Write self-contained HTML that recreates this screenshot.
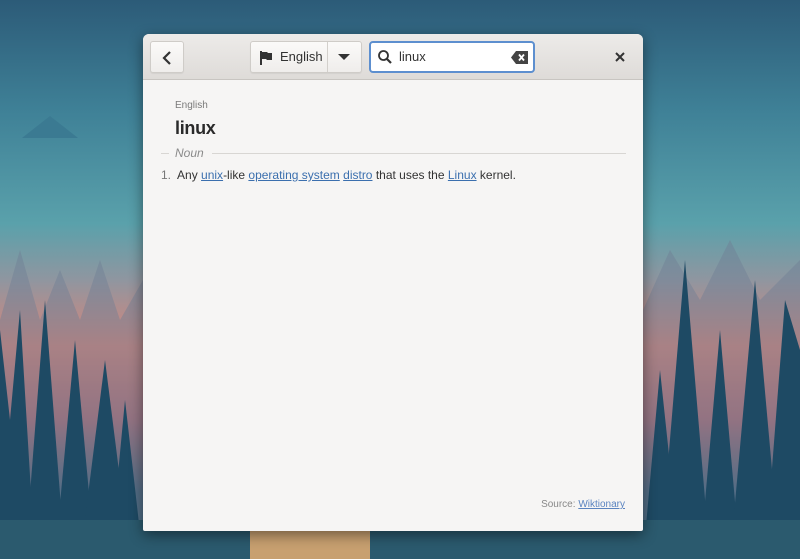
<!DOCTYPE html>
<html><head><meta charset="utf-8"><style>
*{margin:0;padding:0;box-sizing:border-box}
body{width:800px;height:559px;overflow:hidden;position:relative;font-family:"Liberation Sans",sans-serif;}
#bg{position:absolute;left:0;top:0}
.win{position:absolute;left:143px;top:34px;width:500px;height:497px;background:#f6f5f4;border-radius:6px 6px 2px 2px;box-shadow:0 4px 14px rgba(0,0,0,.45);overflow:hidden}
.hdr{height:46px;background:linear-gradient(#edebe9,#dedbd8);border-bottom:1px solid #c8c5c1;position:relative}
.btn{position:absolute;top:7px;height:32px;background:linear-gradient(#fbfaf9,#efedeb);border:1px solid #cfccc8;border-radius:3px;box-shadow:0 1px 1px rgba(0,0,0,.06)}
.search{position:absolute;left:226px;top:7px;width:166px;height:32px;background:#fff;border:2px solid #5d8fcf;border-radius:4px}
.t{position:absolute;white-space:nowrap}
a{color:#3b6fae;text-decoration:underline}
</style></head><body>
<svg id="bg" width="800" height="559" viewBox="0 0 800 559">
<defs>
<linearGradient id="sky" x1="0" y1="0" x2="0" y2="1">
<stop offset="0" stop-color="#2c5b78"/><stop offset=".2" stop-color="#3f8197"/><stop offset=".4" stop-color="#5aa1ab"/><stop offset=".5" stop-color="#8f96a0"/><stop offset=".62" stop-color="#d98478"/><stop offset=".75" stop-color="#b06a74"/><stop offset=".88" stop-color="#3d5f78"/><stop offset="1" stop-color="#2f5f78"/></linearGradient>
</defs>
<rect width="800" height="559" fill="url(#sky)"/>
<polygon points="22,138 50,116 78,138" fill="#3b7a92"/>
<g fill="#6f7f94" opacity=".45">
<polygon points="0,320 20,250 40,320 60,270 80,320 100,260 120,320 143,280 143,559 0,559"/>
<polygon points="643,310 670,250 700,300 730,240 760,300 800,260 800,559 643,559"/>
</g>
<g fill="#1e4a64">
<polygon points="0,559 0,330 10,420 20,310 35,559"/>
<polygon points="25,559 45,300 65,559"/>
<polygon points="55,559 75,340 95,559"/>
<polygon points="80,559 105,360 130,559"/>
<polygon points="110,559 125,400 143,559"/>
<polygon points="643,559 660,370 680,559"/>
<polygon points="660,559 685,260 710,559"/>
<polygon points="700,559 720,330 740,559"/>
<polygon points="730,559 755,280 780,559"/>
<polygon points="765,559 785,300 800,350 800,559"/>
</g>
<rect x="0" y="520" width="800" height="39" fill="#2b5a6e"/>
<rect x="250" y="531" width="120" height="28" fill="#c8a070"/>
</svg>
<div class="win">
<div class="hdr">
<div class="btn" style="left:7px;width:34px"><svg width="34" height="32" viewBox="0 0 34 32"><path d="M19 10 L13 16 L19 22" fill="none" stroke="#333" stroke-width="2.2"/></svg></div>
<div class="btn" style="left:107px;width:112px">
<svg style="position:absolute;left:8px;top:8px" width="14" height="16" viewBox="0 0 14 16"><path d="M2 1 V15" stroke="#333" stroke-width="2"/><path d="M3 2 H8 L9 3 H13 V10 H8 L7 9 H3Z" fill="#333"/></svg>
<span class="t" style="left:29px;top:7px;font-size:13px;color:#333">English</span>
<div style="position:absolute;left:76px;top:0;width:1px;height:30px;background:#d3d0cc"></div>
<svg style="position:absolute;left:87px;top:11px" width="12" height="8"><path d="M0 1 H12 L6 7Z" fill="#333"/></svg>
</div>
<div class="search">
<svg style="position:absolute;left:6px;top:6px" width="16" height="16" viewBox="0 0 16 16"><circle cx="6.5" cy="6.5" r="4.5" fill="none" stroke="#333" stroke-width="1.8"/><path d="M10 10 L14 14" stroke="#333" stroke-width="2.2"/></svg>
<span class="t" style="left:28px;top:6px;font-size:13px;color:#333">linux</span>
<svg style="position:absolute;left:140px;top:8px" width="17" height="13" viewBox="0 0 17 13"><path d="M5 0 H17 V13 H5 L0 6.5Z" fill="#444"/><path d="M8 3.5 L13 9.5 M13 3.5 L8 9.5" stroke="#fff" stroke-width="1.8"/></svg>
</div>
<svg style="position:absolute;left:472px;top:18px" width="10" height="10"><path d="M1 1 L9 9 M9 1 L1 9" stroke="#333" stroke-width="2"/></svg>
</div>
<span class="t" style="left:32px;top:66px;font-size:10px;color:#7a7a7a">English</span>
<span class="t" style="left:32px;top:84px;font-size:18px;font-weight:bold;color:#2a2a2a;letter-spacing:-.3px">linux</span>
<div style="position:absolute;left:18px;top:119px;width:8px;height:1px;background:#d8d6d3"></div>
<span class="t" style="left:32px;top:112px;font-size:12px;font-style:italic;color:#8a8a8a">Noun</span>
<div style="position:absolute;left:69px;top:119px;width:414px;height:1px;background:#d8d6d3"></div>
<span class="t" style="left:18px;top:134px;font-size:12px;color:#333"><span style="color:#777">1.</span>&nbsp; Any <a>unix</a>-like <a>operating system</a> <a>distro</a> that uses the <a>Linux</a> kernel.</span>
<span class="t" style="right:18px;top:465px;font-size:10px;color:#888">Source: <a style="color:#5b84c0">Wiktionary</a></span>
</div>
</body></html>
